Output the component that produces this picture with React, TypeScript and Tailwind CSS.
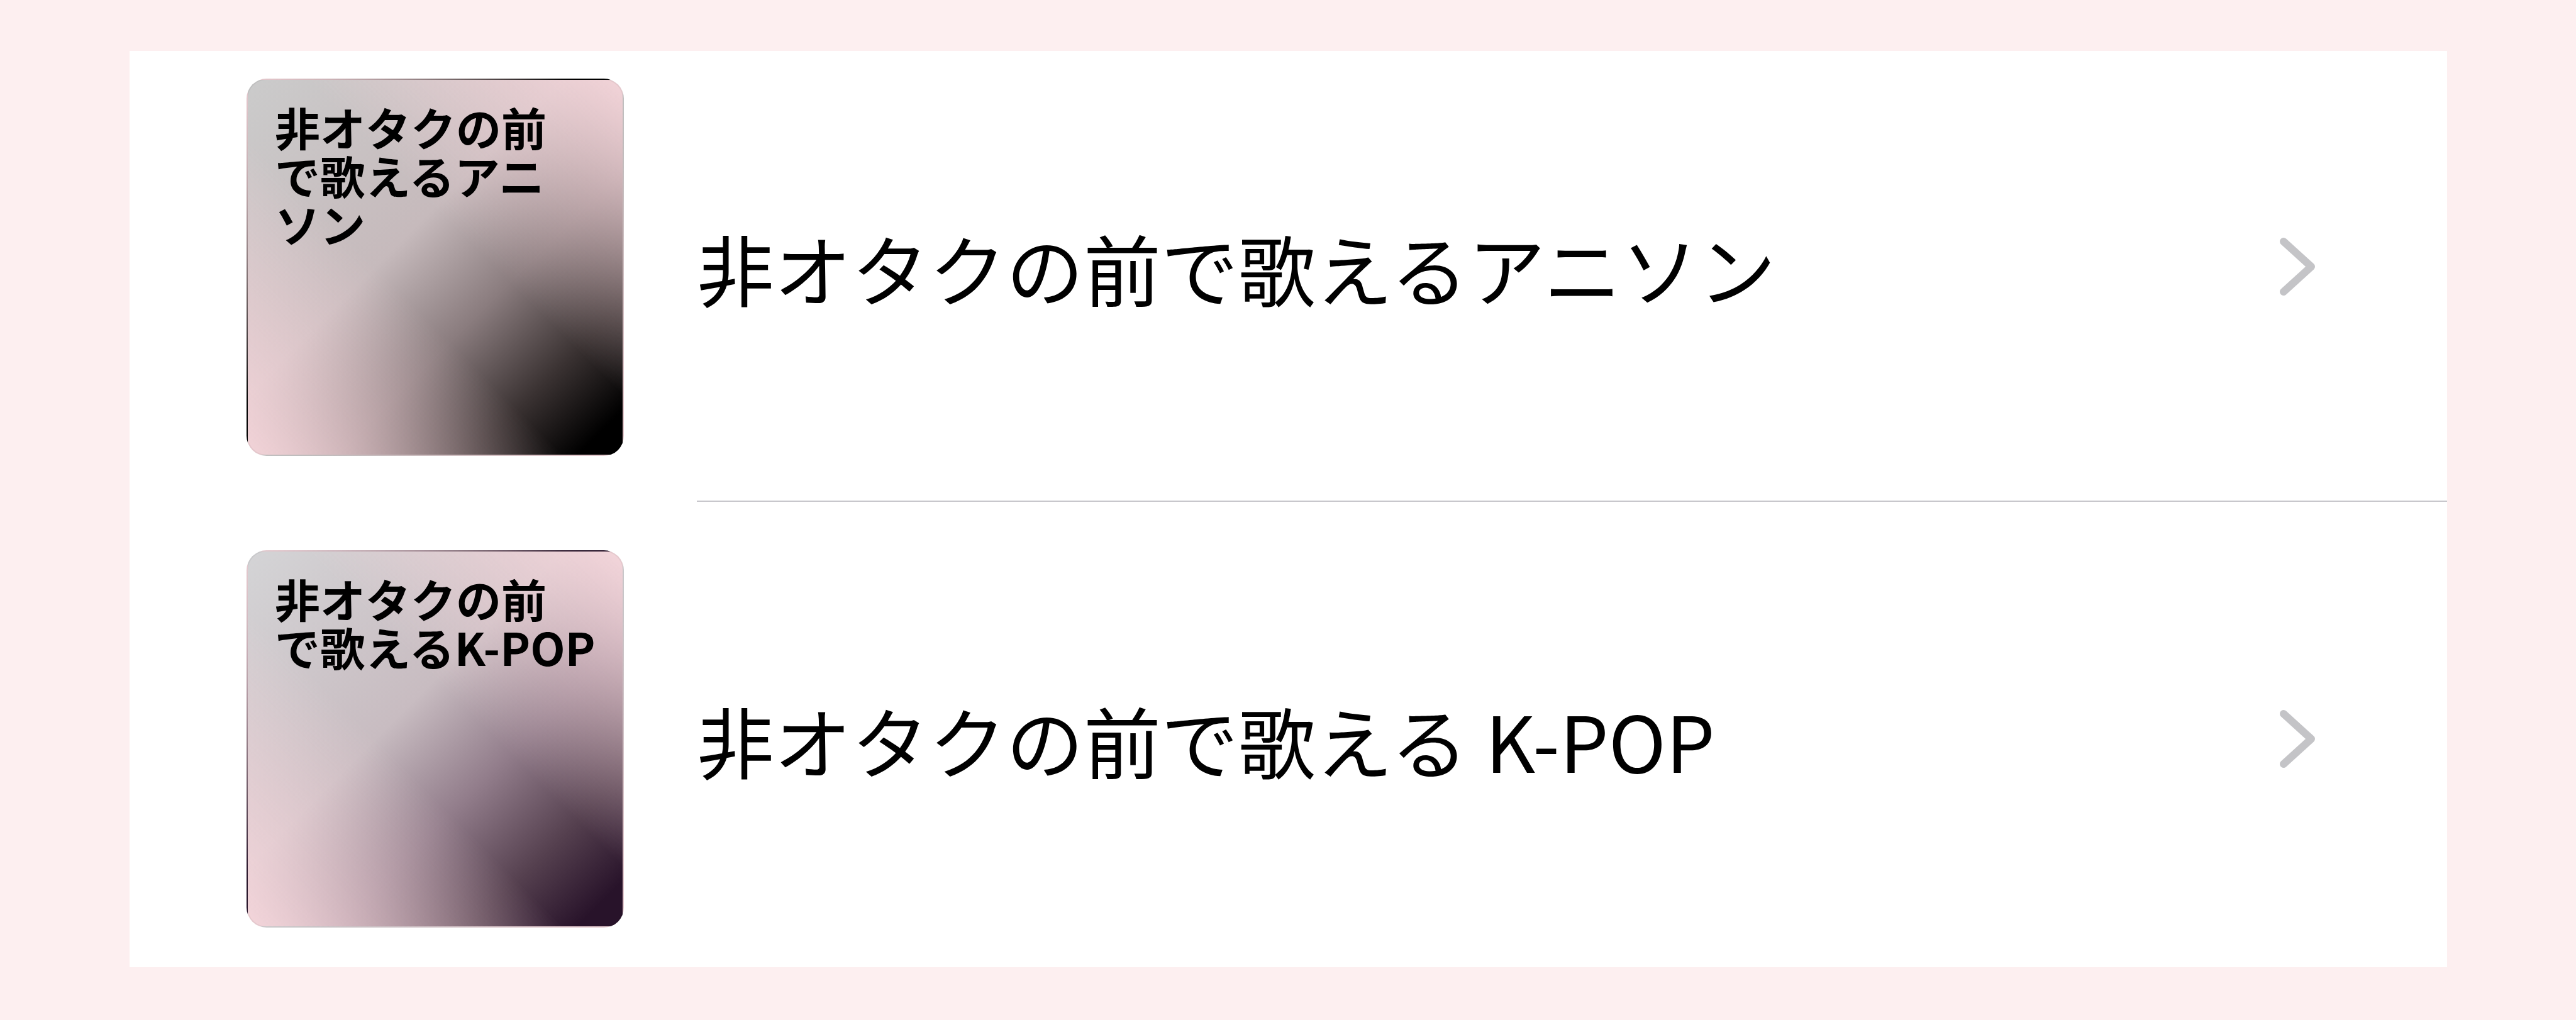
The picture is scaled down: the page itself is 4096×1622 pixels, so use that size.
const rows = [
  {
    title: "非オタクの前で歌えるアニソン",
    cover: ["非オタクの前", "で歌えるアニ", "ソン"],
    tone: "anime",
  },
  {
    title: "非オタクの前で歌える K-POP",
    cover: ["非オタクの前", "で歌えるK-POP"],
    tone: "kpop",
  },
];

function Cover({ lines, tone }: { lines: string[]; tone: string }) {
  const bg =
    tone === "anime"
      ? "bg-[image:linear-gradient(45deg,rgba(246,214,219,0.95)_0%,rgba(246,214,219,0)_42%,rgba(246,214,219,0)_58%,rgba(246,214,219,0.95)_100%),linear-gradient(135deg,#cbcbcb_0%,#c6babc_42%,#8a7c7e_62%,#3a3232_80%,#000_94%)]"
      : "bg-[image:linear-gradient(45deg,rgba(247,216,221,0.95)_0%,rgba(247,216,221,0)_42%,rgba(247,216,221,0)_58%,rgba(247,216,221,0.95)_100%),linear-gradient(135deg,#d4d4d6_0%,#c8bcc1_42%,#927d8b_62%,#55404f_80%,#28132a_94%)]";
  return (
    <div
      className={`w-[600px] h-[600px] rounded-[32px] border-2 border-black/5 pl-[43px] pt-[35px] ${bg}`}
    >
      <p className="text-[72px] leading-[77px] font-bold text-black font-['Noto_Sans_CJK_JP',sans-serif]">
        {lines.map((l, i) => (
          <span key={i} className="block whitespace-nowrap">
            {l}
          </span>
        ))}
      </p>
    </div>
  );
}

function Chevron() {
  return (
    <svg width="64" height="100" viewBox="0 0 64 100" fill="none">
      <path
        d="M10 10 L54 50 L10 90"
        stroke="#c4c4c7"
        strokeWidth="12"
        strokeLinecap="round"
        strokeLinejoin="round"
      />
    </svg>
  );
}

export default function App() {
  return (
    <div className="min-h-[1622px] w-[4096px] bg-[#fdeff0] pt-[81px] pl-[206px]">
      <div className="w-[3685px] bg-white">
        {rows.map((r, i) => {
          const first = i === 0;
          const pad = first ? "pt-[44px] pb-[73px]" : "pt-[77px] pb-[63px]";
          return (
            <div key={r.title} className="flex">
              <div className={`pl-[186px] pr-[116px] ${pad}`}>
                <Cover lines={r.cover} tone={r.tone} />
              </div>
              <div
                className={`flex-1 flex items-center pr-[206px] ${pad} ${
                  first ? "border-b-2 border-[#c8c7cc]" : ""
                }`}
              >
                <span className="flex-1 text-[123px] leading-none text-black font-['Noto_Sans_CJK_JP',sans-serif] whitespace-nowrap">
                  {r.title}
                </span>
                <Chevron />
              </div>
            </div>
          );
        })}
      </div>
    </div>
  );
}
